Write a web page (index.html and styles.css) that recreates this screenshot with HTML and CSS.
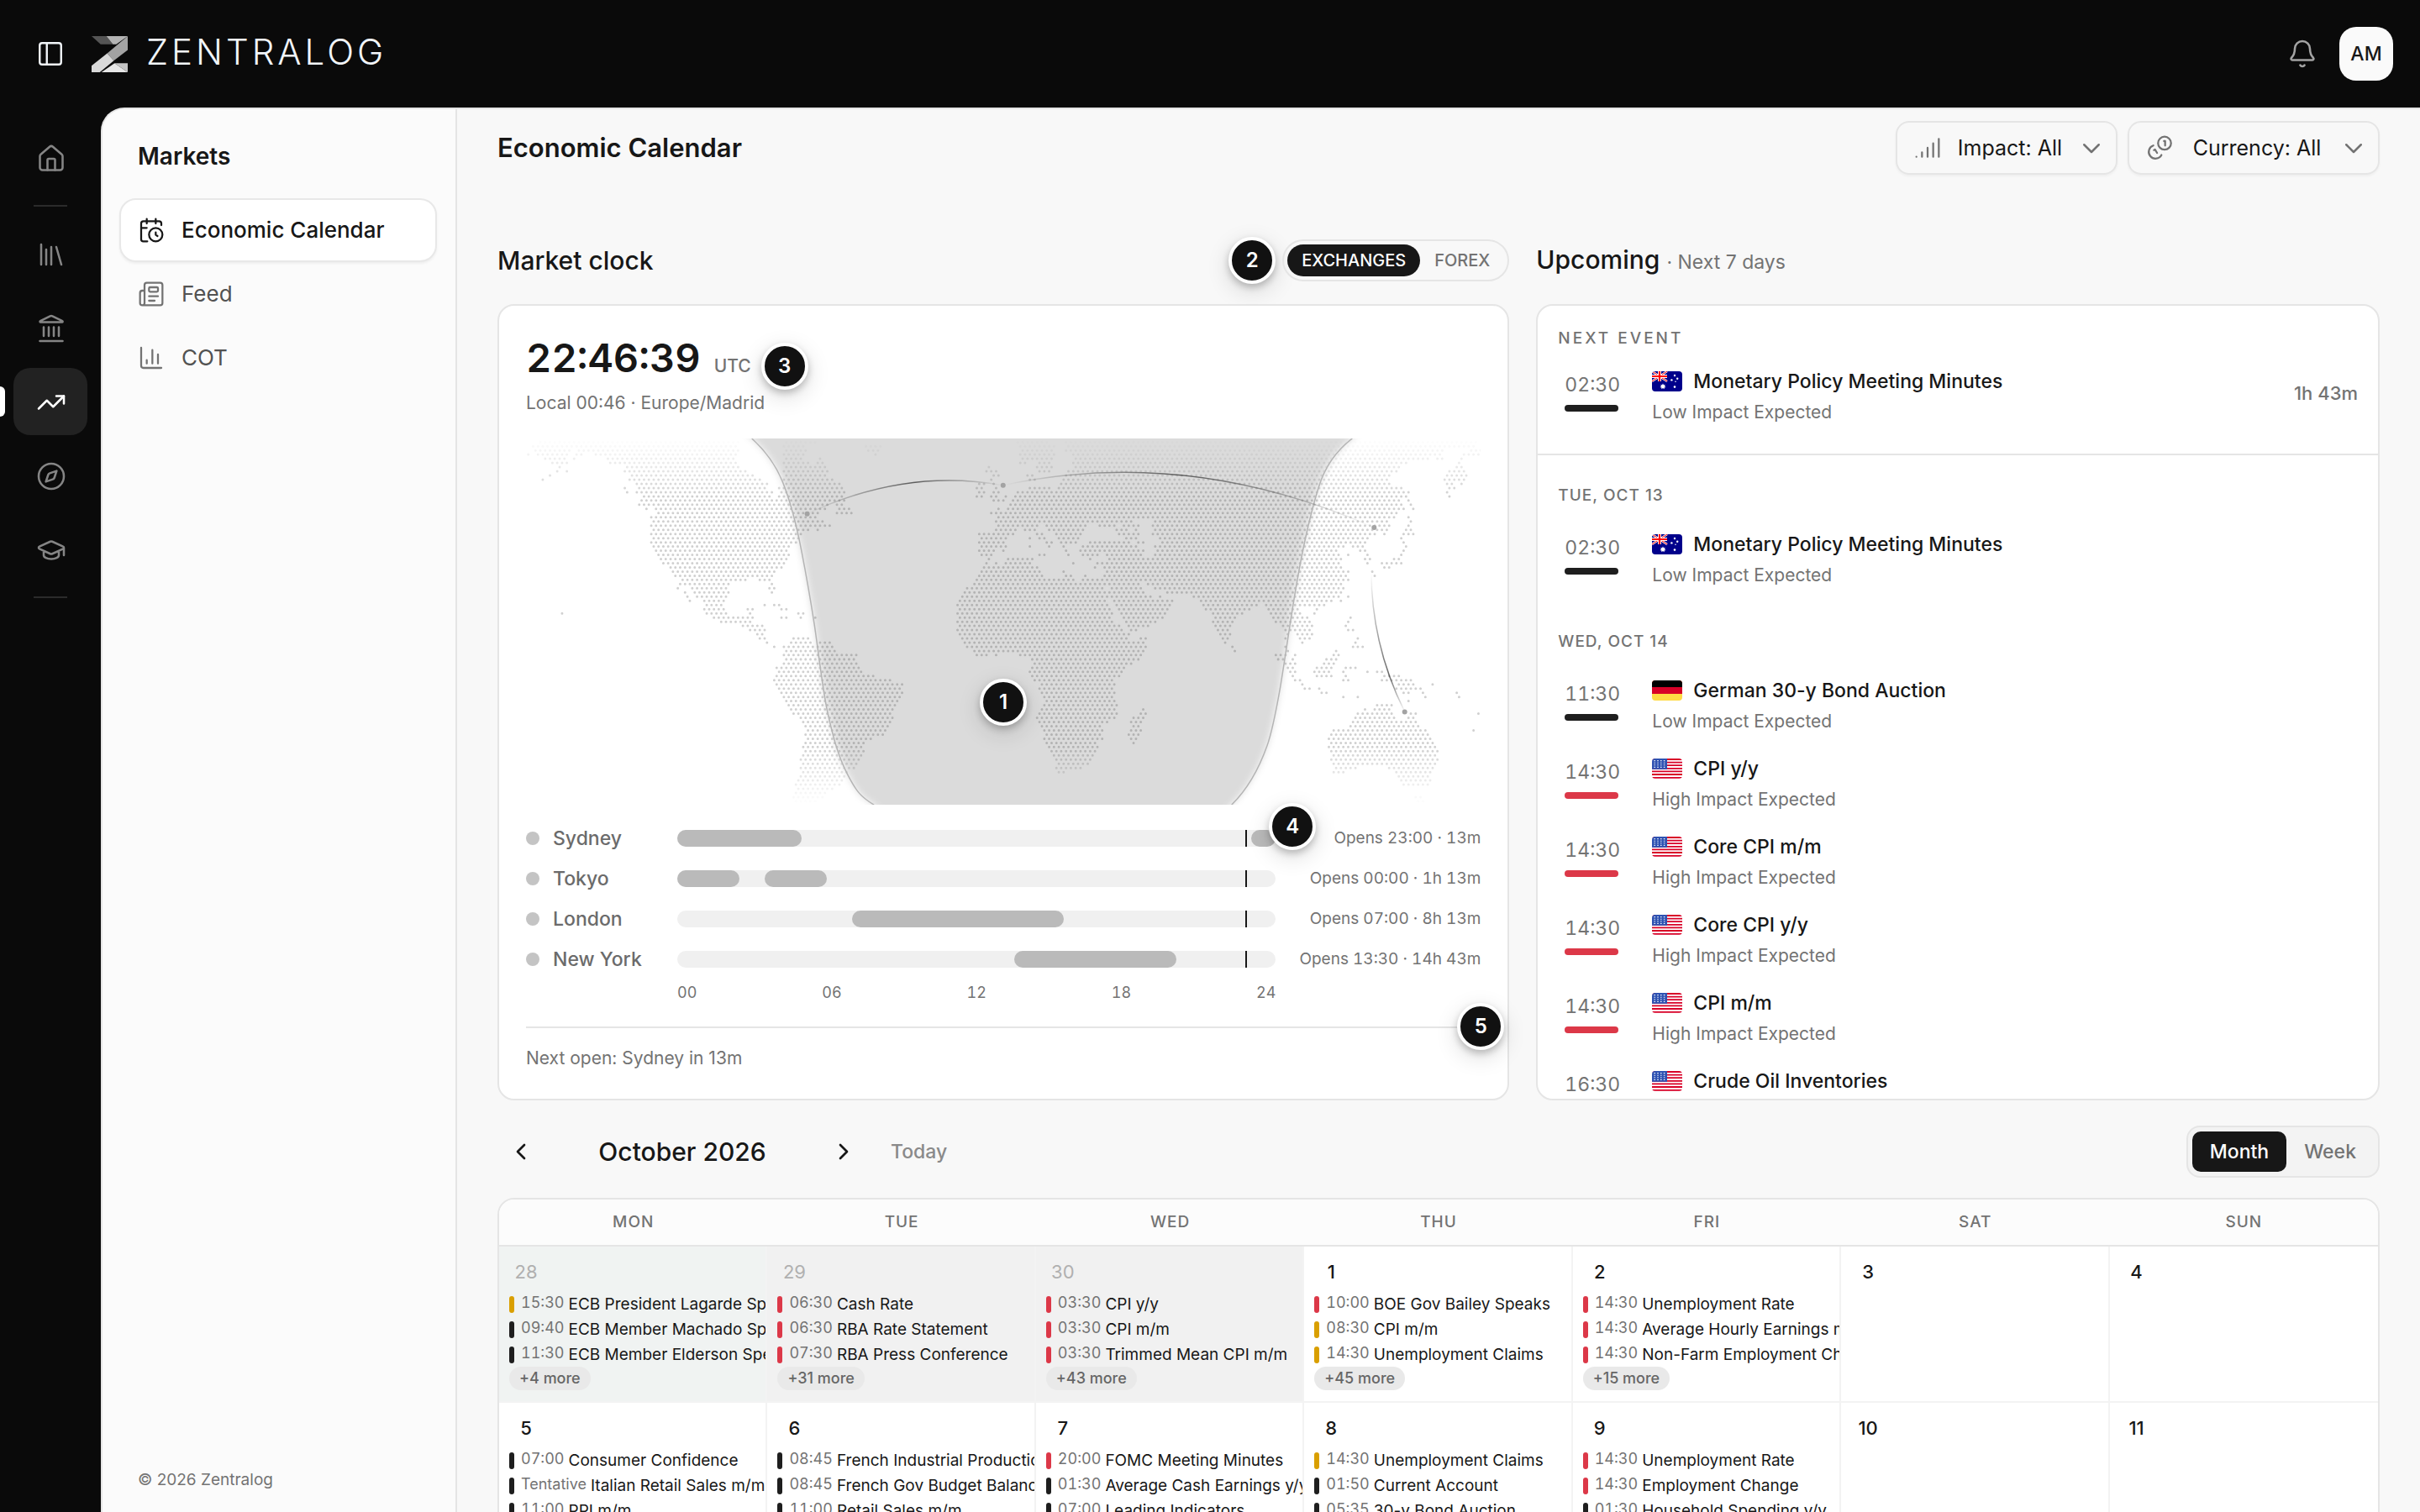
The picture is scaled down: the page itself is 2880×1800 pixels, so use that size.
FILE: index.html
```html
<!DOCTYPE html>
<html lang="en">
<head>
<meta charset="utf-8">
<title>Economic Calendar – Zentralog</title>
<meta name="viewport" content="width=device-width, initial-scale=1">
<link rel="stylesheet" href="styles.css">
</head>
<body>
<svg class="sprite" aria-hidden="true">
  <symbol id="flag-au" viewBox="0 0 36 24">
    <rect width="36" height="24" fill="#00008b"/>
    <path d="M0 0l18 12M18 0L0 12" stroke="#fff" stroke-width="2.4"/>
    <path d="M0 0l18 12M18 0L0 12" stroke="#f00" stroke-width="1"/>
    <path d="M9 0v12M0 6h18" stroke="#fff" stroke-width="4"/>
    <path d="M9 0v12M0 6h18" stroke="#f00" stroke-width="2.2"/>
    <path d="M13 14.6l.9 1.7 1.9-.4-.8 1.8 1.5 1.2-1.9.5v1.9l-1.6-1.2-1.6 1.2v-1.9l-1.9-.5 1.5-1.2-.8-1.8 1.9.4z" fill="#fff"/>
    <circle cx="27" cy="5" r="1.2" fill="#fff"/><circle cx="23.4" cy="10.4" r="1.2" fill="#fff"/><circle cx="30.2" cy="8.8" r="1.2" fill="#fff"/><circle cx="27" cy="18.6" r="1.3" fill="#fff"/><circle cx="28" cy="12.2" r=".8" fill="#fff"/>
  </symbol>
  <symbol id="flag-de" viewBox="0 0 36 24">
    <rect width="36" height="24" fill="#ffda44"/><rect width="36" height="16" fill="#d80027"/><rect width="36" height="8" fill="#000"/>
  </symbol>
  <symbol id="flag-us" viewBox="0 0 36 24">
    <rect width="36" height="24" fill="#fff"/>
    <path d="M0 1h36M0 4.6h36M0 8.2h36M0 11.8h36M0 15.4h36M0 19h36M0 22.8h36" stroke="#d80027" stroke-width="1.8"/>
    <rect width="18" height="12.8" fill="#2e52b2"/>
    <path d="M2.5 2.6h14M2.5 5.2h14M2.5 7.8h14M2.5 10.4h14" stroke="#fff" stroke-width="1.1" stroke-dasharray="1.4 2.4"/>
  </symbol>
  <symbol id="chevron-down" viewBox="0 0 24 24"><path d="M5 9l7 7 7-7"/></symbol>
</svg>

<div class="app">
  <header class="topbar">
    <button class="icon-button" type="button" aria-label="Toggle sidebar">
      <svg class="icon icon-panel" viewBox="0 0 24 24"><rect x="3" y="3" width="18" height="18" rx="2"/><path d="M9 3v18"/></svg>
    </button>
    <a class="brand" href="#">
      <svg class="brand-mark" viewBox="0 0 44 44" aria-hidden="true">
        <path d="M0 0h18l8 10H11z" fill="#555"/>
        <path d="M18 0h26L30 10h-4z" fill="#b4b4b4"/>
        <path d="M44 0v17L27 30l-8-9z" fill="#a3a3a3"/>
        <path d="M19 21l8 9-17 14H0V36z" fill="#d9d9d9"/>
        <path d="M28 33l-16 11h32z" fill="#e6e6e6"/>
        <path d="M28 33h16v11z" fill="#c4c4c4"/>
      </svg>
      <span class="brand-name">ZENTRALOG</span>
    </a>
    <button class="icon-button bell" type="button" aria-label="Notifications">
      <svg class="icon" viewBox="0 0 24 24"><path d="M10.27 21a2 2 0 0 0 3.46 0M3.26 15.33A1 1 0 0 0 4 17h16a1 1 0 0 0 .74-1.67C19.41 13.96 18 12.5 18 8A6 6 0 0 0 6 8c0 4.5-1.41 5.96-2.74 7.33"/></svg>
    </button>
    <button class="avatar" type="button" aria-label="Account">AM</button>
  </header>

  <nav class="rail" aria-label="Sections">
    <a class="rail-item" href="#" aria-label="Home"><svg class="icon" viewBox="0 0 24 24"><path d="M15 21v-8a1 1 0 0 0-1-1h-4a1 1 0 0 0-1 1v8"/><path d="M3 10a2 2 0 0 1 .7-1.53l7-6a2 2 0 0 1 2.6 0l7 6A2 2 0 0 1 21 10v9a2 2 0 0 1-2 2H5a2 2 0 0 1-2-2z"/></svg></a>
    <hr class="rail-rule">
    <a class="rail-item" href="#" aria-label="Library"><svg class="icon" viewBox="0 0 24 24"><path d="M16 6l4 14M12 6v14M8 8v12M4 4v16"/></svg></a>
    <a class="rail-item" href="#" aria-label="Banks"><svg class="icon" viewBox="0 0 24 24"><path d="M6 18v-7M10 18v-7M14 18v-7M18 18v-7M3 22h18M11.1 2.2a2 2 0 0 1 1.8 0l7.9 3.9c.5.2.3.9-.2.9H3.5c-.5 0-.7-.7-.2-.9z"/></svg></a>
    <a class="rail-item active" href="#" aria-label="Markets" aria-current="page"><svg class="icon" viewBox="0 0 24 24"><path d="M22 7l-8.500 8.500-5-5L2 17"/><path d="M16 7h6v6"/></svg></a>
    <a class="rail-item" href="#" aria-label="Explore"><svg class="icon" viewBox="0 0 24 24"><circle cx="12" cy="12" r="10"/><path d="M16.240 7.760l-1.800 5.410a2 2 0 0 1-1.270 1.270L7.760 16.240l1.800-5.410a2 2 0 0 1 1.270-1.270z"/></svg></a>
    <a class="rail-item" href="#" aria-label="Academy"><svg class="icon" viewBox="0 0 24 24"><path d="M21.420 10.920a1 1 0 0 0-.02-1.840L12.830 5.180a2 2 0 0 0-1.660 0L2.600 9.080a1 1 0 0 0 0 1.830l8.570 3.910a2 2 0 0 0 1.660 0zM22 10v6M6 12.500V16a6 3 0 0 0 12 0v-3.500"/></svg></a>
    <hr class="rail-rule">
  </nav>

  <div class="panel">
    <aside class="sidebar">
      <h2 class="sidebar-title">Markets</h2>
      <nav class="menu" aria-label="Markets">
        <a class="menu-item active" href="#" aria-current="page"><svg class="icon" viewBox="0 0 24 24"><path d="M16 14v2.200l1.600 1M16 2v4M21 7.500V6a2 2 0 0 0-2-2H5a2 2 0 0 0-2 2v14a2 2 0 0 0 2 2h3.500M3 10h5M8 2v4"/><circle cx="16" cy="16" r="6"/></svg>Economic Calendar</a>
        <a class="menu-item" href="#"><svg class="icon" viewBox="0 0 24 24"><path d="M15 18h-5M18 14h-8M4 22h16a2 2 0 0 0 2-2V4a2 2 0 0 0-2-2H8a2 2 0 0 0-2 2v16a2 2 0 0 1-4 0v-9a2 2 0 0 1 2-2h2"/><rect x="10" y="6" width="8" height="4" rx="1"/></svg>Feed</a>
        <a class="menu-item" href="#"><svg class="icon" viewBox="0 0 24 24"><path d="M3 3v16a2 2 0 0 0 2 2h16M18 17V9M13 17V5M8 17v-3"/></svg>COT</a>
      </nav>
      <p class="copyright">© 2026 Zentralog</p>
    </aside>

    <main class="main">
      <div class="page-head">
        <h1 class="page-title">Economic Calendar</h1>
        <div class="filters">
          <label class="filter filter-impact">
            <svg class="icon" viewBox="0 0 24 24"><path d="M2 20h.01M7 20v-4M12 20v-8M17 20V8M22 4v16"/></svg>
            <select aria-label="Impact"><option>Impact: All</option></select>
            <svg class="icon chevron"><use href="#chevron-down"/></svg>
          </label>
          <label class="filter filter-currency">
            <svg class="icon" viewBox="0 0 24 24"><path d="M13.740 18.330A6 6 0 1 1 6.460 9.900M7 14l1-.5 1.800 3M16 6h1v4"/><circle cx="16.500" cy="7.800" r="5.800"/></svg>
            <select aria-label="Currency"><option>Currency: All</option></select>
            <svg class="icon chevron"><use href="#chevron-down"/></svg>
          </label>
        </div>
      </div>

      <div class="columns">
        <section class="column">
          <div class="section-head">
            <h2 class="section-title">Market clock</h2>
            <div class="clock-tools">
              <span class="marker">2</span>
              <div class="pill-toggle">
                <button class="pill on" type="button" aria-pressed="true">EXCHANGES</button>
                <button class="pill" type="button" aria-pressed="false">FOREX</button>
              </div>
            </div>
          </div>
          <div class="card clock-card">
            <div class="clock-line">
              <span class="clock-time">22:46:39</span>
              <span class="clock-zone">UTC<span class="marker marker-zone">3</span></span>
            </div>
            <p class="clock-local">Local 00:46 · Europe/Madrid</p>
            <div class="map">
              <svg class="map-svg" viewBox="0 0 1136 436" role="img" aria-label="World map with day and night">
                <defs>
                  <linearGradient id="fade" x1="0" y1="0" x2="0" y2="1">
                    <stop offset="0" stop-color="#fff" stop-opacity="0"/><stop offset=".16" stop-color="#fff"/>
                    <stop offset=".84" stop-color="#fff"/><stop offset="1" stop-color="#fff" stop-opacity="0"/>
                  </linearGradient>
                  <mask id="fade-mask" maskUnits="userSpaceOnUse" x="0" y="0" width="1136" height="436"><rect width="1136" height="436" fill="url(#fade)"/></mask>
                  <filter id="soft" x="-5%" y="-5%" width="110%" height="110%"><feGaussianBlur stdDeviation="4"/></filter>
                  <linearGradient id="arc-a" gradientUnits="userSpaceOnUse" x1="334" y1="0" x2="568" y2="0"><stop offset="0" stop-color="#333" stop-opacity="0"/><stop offset=".55" stop-color="#333" stop-opacity=".75"/><stop offset="1" stop-color="#333" stop-opacity="0"/></linearGradient>
                  <linearGradient id="arc-b" gradientUnits="userSpaceOnUse" x1="568" y1="0" x2="1009" y2="0"><stop offset="0" stop-color="#333" stop-opacity="0"/><stop offset=".48" stop-color="#333" stop-opacity=".75"/><stop offset="1" stop-color="#333" stop-opacity="0"/></linearGradient>
                  <linearGradient id="arc-c" gradientUnits="userSpaceOnUse" x1="0" y1="106" x2="0" y2="326"><stop offset=".25" stop-color="#333" stop-opacity="0"/><stop offset=".8" stop-color="#333" stop-opacity=".75"/><stop offset="1" stop-color="#333" stop-opacity="0"/></linearGradient>
                </defs>
                <path id="land" class="land" mask="url(#fade-mask)"/>
                <path class="night" filter="url(#soft)" d="M238-30L268.700 0C284 14 296 29 305 51S322 104 328 135S339 195 343 221S353 300 358.600 325S370 375 381.600 398S399 427 414 436L446 466H810L839.500 436C862 414 875 386 881.600 366S894 315 897 298S907 235 909 221S916 174 920 155S934 85 943 58S966 13 983 0L1013-30z"/>
                <path class="terminator" d="M268.700 0C284 14 296 29 305 51S322 104 328 135S339 195 343 221S353 300 358.600 325S370 375 381.600 398S399 427 414 436M983 0C966 13 951 32 943 58S925 128 920 155S911 208 909 221S900 281 897 298S888 348 881.600 366S862 414 839.500 436"/>
                <path class="arc" stroke="url(#arc-a)" d="M334.500 89.700Q451 34.700 567.600 55.700"/>
                <path class="arc" stroke="url(#arc-b)" d="M567.600 55.700Q788 8.400 1009 106"/>
                <path class="arc" stroke="url(#arc-c)" d="M1009 106Q994 222 1045.400 325.300"/>
                <g class="city"><circle cx="334.500" cy="89.700" r="3"/><circle cx="567.600" cy="55.700" r="3"/><circle cx="1009" cy="106" r="3"/><circle cx="1045.400" cy="325.300" r="3"/></g>
              </svg>
              <span class="marker marker-map">1</span>
            </div>
            <ul class="sessions">
              <li class="session"><span class="session-name">Sydney</span><span class="track"><i class="span" style="left:0;width:20.830%"></i><i class="span" style="left:95.830%;width:4.170%"></i><i class="now"></i><span class="marker marker-track">4</span></span><span class="session-note">Opens 23:00 · 13m</span></li>
              <li class="session"><span class="session-name">Tokyo</span><span class="track"><i class="span" style="left:0;width:10.420%"></i><i class="span" style="left:14.580%;width:10.420%"></i><i class="now"></i></span><span class="session-note">Opens 00:00 · 1h 13m</span></li>
              <li class="session"><span class="session-name">London</span><span class="track"><i class="span" style="left:29.170%;width:35.420%"></i><i class="now"></i></span><span class="session-note">Opens 07:00 · 8h 13m</span></li>
              <li class="session"><span class="session-name">New York</span><span class="track"><i class="span" style="left:56.250%;width:27.080%"></i><i class="now"></i></span><span class="session-note">Opens 13:30 · 14h 43m</span></li>
            </ul>
            <div class="axis"><span class="axis-scale"><span>00</span><span>06</span><span>12</span><span>18</span><span>24</span></span></div>
            <div class="clock-foot">Next open: Sydney in 13m<span class="marker marker-foot">5</span></div>
          </div>
        </section>

        <section class="column">
          <div class="section-head">
            <h2 class="section-title">Upcoming <small>· Next 7 days</small></h2>
          </div>
          <div class="card upcoming">
            <div class="next-event">
              <h3 class="eyebrow">NEXT EVENT</h3>
              <article class="event">
                <div class="event-time low">02:30</div>
                <div class="event-body"><h4><svg class="flag"><use href="#flag-au"/></svg>Monetary Policy Meeting Minutes</h4><p>Low Impact Expected</p></div>
                <span class="event-left">1h 43m</span>
              </article>
            </div>
            <div class="event-list">
              <section class="event-day">
                <h3 class="day-label">TUE, OCT 13</h3>
                <article class="event"><div class="event-time low">02:30</div><div class="event-body"><h4><svg class="flag"><use href="#flag-au"/></svg>Monetary Policy Meeting Minutes</h4><p>Low Impact Expected</p></div></article>
              </section>
              <section class="event-day">
                <h3 class="day-label">WED, OCT 14</h3>
                <article class="event"><div class="event-time low">11:30</div><div class="event-body"><h4><svg class="flag"><use href="#flag-de"/></svg>German 30-y Bond Auction</h4><p>Low Impact Expected</p></div></article>
                <article class="event"><div class="event-time high">14:30</div><div class="event-body"><h4><svg class="flag"><use href="#flag-us"/></svg>CPI y/y</h4><p>High Impact Expected</p></div></article>
                <article class="event"><div class="event-time high">14:30</div><div class="event-body"><h4><svg class="flag"><use href="#flag-us"/></svg>Core CPI m/m</h4><p>High Impact Expected</p></div></article>
                <article class="event"><div class="event-time high">14:30</div><div class="event-body"><h4><svg class="flag"><use href="#flag-us"/></svg>Core CPI y/y</h4><p>High Impact Expected</p></div></article>
                <article class="event"><div class="event-time high">14:30</div><div class="event-body"><h4><svg class="flag"><use href="#flag-us"/></svg>CPI m/m</h4><p>High Impact Expected</p></div></article>
                <article class="event"><div class="event-time low">16:30</div><div class="event-body"><h4><svg class="flag"><use href="#flag-us"/></svg>Crude Oil Inventories</h4></div></article>
              </section>
            </div>
          </div>
        </section>
      </div>

      <div class="cal-bar">
        <button class="cal-arrow" type="button" aria-label="Previous month"><svg class="icon" viewBox="0 0 24 24"><path d="M15 18l-6-6 6-6"/></svg></button>
        <h2 class="cal-title">October 2026</h2>
        <button class="cal-arrow" type="button" aria-label="Next month"><svg class="icon" viewBox="0 0 24 24"><path d="M9 18l6-6-6-6"/></svg></button>
        <button class="cal-today" type="button">Today</button>
        <div class="view-toggle">
          <button class="view on" type="button" aria-pressed="true">Month</button>
          <button class="view" type="button" aria-pressed="false">Week</button>
        </div>
      </div>

      <div class="cal-frame">
        <table class="cal">
          <thead><tr><th>MON</th><th>TUE</th><th>WED</th><th>THU</th><th>FRI</th><th>SAT</th><th>SUN</th></tr></thead>
          <tbody>
            <tr>
              <td class="out first"><span class="date">28</span>
                <p class="item medium"><time>15:30</time>ECB President Lagarde Speaks</p><p class="item low"><time>09:40</time>ECB Member Machado Speaks</p><p class="item low"><time>11:30</time>ECB Member Elderson Speaks</p><button class="more" type="button">+4 more</button></td>
              <td class="out"><span class="date">29</span>
                <p class="item high"><time>06:30</time>Cash Rate</p><p class="item high"><time>06:30</time>RBA Rate Statement</p><p class="item high"><time>07:30</time>RBA Press Conference</p><button class="more" type="button">+31 more</button></td>
              <td class="out"><span class="date">30</span>
                <p class="item high"><time>03:30</time>CPI y/y</p><p class="item high"><time>03:30</time>CPI m/m</p><p class="item high"><time>03:30</time>Trimmed Mean CPI m/m</p><button class="more" type="button">+43 more</button></td>
              <td><span class="date">1</span>
                <p class="item high"><time>10:00</time>BOE Gov Bailey Speaks</p><p class="item medium"><time>08:30</time>CPI m/m</p><p class="item medium"><time>14:30</time>Unemployment Claims</p><button class="more" type="button">+45 more</button></td>
              <td><span class="date">2</span>
                <p class="item high"><time>14:30</time>Unemployment Rate</p><p class="item high"><time>14:30</time>Average Hourly Earnings m/m</p><p class="item high"><time>14:30</time>Non-Farm Employment Change</p><button class="more" type="button">+15 more</button></td>
              <td><span class="date">3</span></td>
              <td><span class="date">4</span></td>
            </tr>
            <tr>
              <td><span class="date">5</span>
                <p class="item low"><time>07:00</time>Consumer Confidence</p><p class="item low"><time>Tentative</time>Italian Retail Sales m/m</p><p class="item low"><time>11:00</time>PPI m/m</p></td>
              <td><span class="date">6</span>
                <p class="item low"><time>08:45</time>French Industrial Production m/m</p><p class="item low"><time>08:45</time>French Gov Budget Balance</p><p class="item low"><time>11:00</time>Retail Sales m/m</p></td>
              <td><span class="date">7</span>
                <p class="item high"><time>20:00</time>FOMC Meeting Minutes</p><p class="item low"><time>01:30</time>Average Cash Earnings y/y</p><p class="item low"><time>07:00</time>Leading Indicators</p></td>
              <td><span class="date">8</span>
                <p class="item medium"><time>14:30</time>Unemployment Claims</p><p class="item low"><time>01:50</time>Current Account</p><p class="item low"><time>05:35</time>30-y Bond Auction</p></td>
              <td><span class="date">9</span>
                <p class="item high"><time>14:30</time>Unemployment Rate</p><p class="item high"><time>14:30</time>Employment Change</p><p class="item low"><time>01:30</time>Household Spending y/y</p></td>
              <td><span class="date">10</span></td>
              <td><span class="date">11</span></td>
            </tr>
          </tbody>
        </table>
      </div>
    </main>
  </div>
</div>
<script src="map.js"></script>
</body>
</html>
```
FILE: styles.css
```css
:root {
  --ink: #171717;
  --muted: #737373;
  --line: #e5e5e5;
  --high: #dc3848;
  --medium: #d99f00;
  --low: #1e1e1e;
  --text-xs: 18px;
  --text-s: 19px;
  --text-m: 21px;
  --text-l: 23px;
  --text-xl: 26px;
  --text-2xl: 30px;
}

* { box-sizing: border-box; }

body, h1, h2, h3, h4, p, ul, hr { margin: 0; padding: 0; }

body {
  background: #0a0a0a;
  color: var(--ink);
  font-family: Inter, "Liberation Sans", sans-serif;
  font-size: var(--text-l);
  line-height: 28px;
}

h1, h2, h3, h4 { font-weight: 500; }
ul { list-style: none; }
a { color: inherit; text-decoration: none; }

button, select {
  border: 0;
  background: none;
  color: inherit;
  font: inherit;
  padding: 0;
}

.sprite { position: absolute; width: 0; height: 0; }

.icon {
  width: 32px;
  height: 32px;
  flex: none;
  fill: none;
  stroke: currentColor;
  stroke-width: 1.7;
  stroke-linecap: round;
  stroke-linejoin: round;
}

.app {
  display: grid;
  grid-template: 128px minmax(0, 1fr) / 120px minmax(0, 1fr);
  height: 100vh;
  overflow: hidden;
}

/* Top bar */
.topbar {
  grid-column: 1 / -1;
  display: flex;
  align-items: center;
  padding: 0 32px 0 40px;
}

.icon-button { display: grid; place-items: center; width: 40px; height: 40px; color: #f1f5f9; }
.icon-panel { width: 34px; height: 34px; }
.bell { margin-left: auto; margin-right: 24px; color: #a3a3a3; }

.brand { display: flex; align-items: center; gap: 22px; margin-left: 29px; color: #f1f5f9; }
.brand-mark { width: 43px; height: 43px; }
.brand-name { padding-bottom: 5px; font-size: 42px; font-weight: 300; line-height: 48px; letter-spacing: 4px; }

.avatar {
  width: 64px;
  height: 64px;
  border-radius: 20px;
  background: #fafafa;
  color: var(--ink);
  font-weight: 500;
}

/* Icon rail */
.rail { display: flex; flex-direction: column; align-items: center; gap: 8px; padding: 20px 16px; color: #858585; }

.rail-item {
  position: relative;
  display: grid;
  place-items: center;
  width: 88px;
  height: 80px;
  padding: 1px 0 0 1px;
  border-radius: 20px;
}

.rail-item .icon, .bell .icon { width: 36px; height: 36px; }
.rail-item.active { background: #222; color: #fff; }

.rail-item.active::before {
  content: "";
  position: absolute;
  left: -16px;
  top: 22px;
  width: 6px;
  height: 36px;
  border-radius: 0 6px 6px 0;
  background: #fff;
}

.rail-rule { width: 40px; height: 2px; margin: 8px 0; border: 0; background: #2b2b2b; }

/* Panel and sidebar */
.panel {
  display: grid;
  grid-template-columns: 422px minmax(0, 1fr);
  border: solid var(--line);
  border-width: 2px 0 0 2px;
  border-top-left-radius: 28px;
  background: #f8f8f8;
  overflow: hidden;
}

.sidebar {
  display: flex;
  flex-direction: column;
  padding: 40px 22px 24px 20px;
  border-right: 2px solid var(--line);
  background: #fbfbfb;
}

.sidebar-title { padding: 0 22px; font-size: 28px; font-weight: 600; line-height: 32px; }
.menu { margin-top: 34px; }

.menu-item {
  display: flex;
  align-items: center;
  gap: 20px;
  height: 76px;
  padding: 0 20px;
  border: 2px solid transparent;
  border-radius: 20px;
  color: #525252;
  font-size: var(--text-xl);
}

.menu-item .icon { color: #737373; }

.menu-item.active {
  border-color: #e8e8e8;
  background: #fff;
  color: var(--ink);
  font-weight: 500;
  box-shadow: 0 2px 3px rgb(0 0 0 / 5%);
}

.menu-item.active .icon { color: var(--ink); }
.copyright { margin-top: auto; padding: 0 22px; color: var(--muted); font-size: var(--text-s); }

/* Main area */
.main { padding: 0 48px; overflow: hidden; }
.page-head { display: flex; align-items: center; justify-content: space-between; padding: 14px 0; }
.page-title { font-size: 31px; font-weight: 600; line-height: 40px; }
.filters { display: flex; gap: 12px; }

.filter {
  display: flex;
  align-items: center;
  height: 64px;
  padding: 0 20px;
  border: 2px solid var(--line);
  border-radius: 16px;
  color: var(--muted);
  box-shadow: 0 2px 3px rgb(0 0 0 / 4%);
}

.filter-impact { width: 264px; }
.filter-currency { width: 300px; }
.filter select { flex: 1; min-width: 0; appearance: none; color: var(--ink); font-size: 25px; text-align-last: center; }
.filter .chevron { width: 30px; height: 30px; margin-right: -6px; stroke-width: 2; }

.columns { display: grid; grid-template-columns: minmax(0, 6fr) minmax(0, 5fr); gap: 32px; margin-top: 60px; }
.column { display: flex; flex-direction: column; }
.section-head { display: flex; align-items: center; justify-content: space-between; min-height: 56px; margin-bottom: 24px; }
.section-title { font-size: var(--text-2xl); line-height: 40px; }
.section-title small { color: var(--muted); font-size: var(--text-l); font-weight: 400; }

.clock-tools { display: flex; align-items: center; gap: 8px; }
.pill-toggle { display: flex; padding: 4px; border: 2px solid var(--line); border-radius: 25px; }
.pill { height: 38px; padding: 0 17px; border-radius: 19px; color: var(--muted); font-size: 20px; font-weight: 500; }
.pill.on { background: var(--ink); color: #fff; }

.card { border: 2px solid var(--line); border-radius: 20px; background: #fff; }

.marker {
  display: grid;
  place-items: center;
  width: 56px;
  height: 56px;
  border: 4px solid #fff;
  border-radius: 50%;
  background: #111;
  color: #fff;
  font-size: 24px;
  font-weight: 600;
  line-height: 28px;
  box-shadow: 0 4px 8px rgb(0 0 0 / 22%), 0 8px 28px rgb(0 0 0 / 14%);
}

/* Market clock */
.clock-card { padding: 32px 32px 34px; }
.clock-line { display: flex; align-items: baseline; gap: 16px; }
.clock-time { font-size: 47px; font-weight: 600; line-height: 60px; font-variant-numeric: tabular-nums; }
.clock-zone { position: relative; color: var(--muted); font-size: var(--text-m); font-weight: 500; }
.marker-zone { position: absolute; left: 100%; top: -14px; margin-left: 12px; }
.clock-local { margin-top: 10px; color: var(--muted); font-size: var(--text-m); }

.map { position: relative; margin-top: 28px; }
.map-svg { display: block; width: 100%; }
.land { fill: none; stroke: #d0d0d0; stroke-width: 3; stroke-linecap: round; }
.night { fill: rgb(0 0 0 / 14%); }
.terminator { fill: none; stroke: #b4b4b4; stroke-width: 1.500; }
.arc { fill: none; stroke-width: 1.500; }
.city { fill: #a3a3a3; }
.marker-map { position: absolute; left: 50%; top: 72%; translate: -50% -50%; }

.sessions { display: grid; gap: 20px; margin-top: 26px; }
.session, .axis { display: grid; grid-template-columns: 164px minmax(0, 1fr) 228px; gap: 16px; align-items: center; }
.session-name { display: flex; align-items: center; gap: 16px; color: #6b6b6b; font-weight: 500; }
.session-name::before { content: ""; width: 16px; height: 16px; border-radius: 50%; background: #c4c4c4; }
.track { position: relative; height: 20px; border-radius: 10px; background: #f0f0f0; }
.span { position: absolute; top: 0; height: 20px; border-radius: 10px; background: #bababa; }
.now { position: absolute; left: 94.900%; top: 0; width: 2px; height: 20px; background: var(--ink); }
.marker-track { position: absolute; right: -48px; top: -32px; }
.session-note { color: var(--muted); font-size: var(--text-s); text-align: right; font-variant-numeric: tabular-nums; white-space: nowrap; }
.axis { margin-top: 14px; }
.axis-scale { grid-column: 2; display: flex; justify-content: space-between; color: var(--muted); font-size: var(--text-xs); line-height: 24px; font-variant-numeric: tabular-nums; }
.clock-foot { position: relative; margin-top: 28px; padding-top: 22px; border-top: 2px solid var(--line); color: var(--muted); font-size: var(--text-m); }
.marker-foot { position: absolute; right: -28px; top: -30px; }

/* Upcoming events */
.upcoming { flex: 1; contain: size; overflow: hidden; }
.next-event { padding: 25px 24px 23px; border-bottom: 2px solid var(--line); }
.eyebrow { margin-bottom: 7px; color: var(--muted); font-size: var(--text-s); letter-spacing: 3px; }
.event-list { padding: 34px 24px; }
.event-day + .event-day { margin-top: 39px; }
.day-label { margin-bottom: 14px; color: var(--muted); font-size: var(--text-s); letter-spacing: 1px; }

.event { display: flex; gap: 40px; height: 93px; padding: 14px 0 0 8px; }
.event-time { width: 64px; padding-top: 6px; color: var(--muted); font-size: var(--text-l); font-variant-numeric: tabular-nums; text-align: center; white-space: nowrap; }
.event-time::after { content: ""; display: block; height: 8px; margin-top: 10px; border-radius: 4px; background: var(--impact); }
.event-body { flex: 1; }
.event-body h4 { display: flex; align-items: center; gap: 13px; font-size: var(--text-l); line-height: 32px; }
.event-body p { margin-top: 7px; color: var(--muted); font-size: var(--text-m); }
.flag { width: 36px; height: 24px; border-radius: 4px; }
.event-left { margin-top: 16px; color: var(--muted); font-size: 22px; font-weight: 500; }

.low { --impact: var(--low); }
.medium { --impact: var(--medium); }
.high { --impact: var(--high); }

/* Calendar */
.cal-bar { display: flex; align-items: center; height: 62px; margin: 30px 0 24px; }
.cal-arrow { display: grid; place-items: center; width: 56px; height: 56px; }
.cal-arrow .icon { stroke-width: 2; }
.cal-title { width: 328px; font-size: var(--text-2xl); line-height: 40px; text-align: center; }
.cal-today { margin-left: 28px; color: #8a8a8a; font-weight: 500; }
.view-toggle { display: flex; margin-left: auto; padding: 5px; border: 2px solid var(--line); border-radius: 16px; background: #f3f3f3; }
.view { height: 48px; padding: 0 21px; border-radius: 10px; color: var(--muted); font-weight: 500; }
.view.on { background: var(--ink); color: #fff; }

.cal-frame { border: 2px solid var(--line); border-radius: 20px 20px 0 0; background: #fff; overflow: hidden; }
.cal { width: 100%; border-spacing: 0; table-layout: fixed; }
.cal th { height: 56px; padding: 0; border-bottom: 2px solid var(--line); background: #fcfcfc; color: var(--muted); font-size: var(--text-s); font-weight: 500; letter-spacing: 1px; }
.cal td { height: 186px; padding: 16px 0 8px 12px; border: solid #f3f3f3; border-width: 0 2px 2px 0; vertical-align: top; overflow: hidden; }
.cal td:last-child { border-right: 0; }
.cal .out { background: #f1f1f1; }
.cal .out.first { background: #f0f3f2; }
.date { display: block; width: 40px; margin-bottom: 9px; font-size: 22px; font-weight: 500; text-align: center; }
.out .date { color: #b0b0b0; font-weight: 400; }
.item { display: flex; align-items: center; height: 30px; padding-top: 2px; overflow: hidden; font-size: var(--text-s); line-height: 24px; white-space: nowrap; }
.item::before { content: ""; flex: none; width: 6px; height: 20px; margin-right: 8px; border-radius: 3px; background: var(--impact); }
.item time { margin-right: 5px; padding-bottom: 4px; color: var(--muted); font-size: var(--text-xs); font-variant-numeric: tabular-nums; }
.more { display: block; height: 28px; padding: 0 12px; border-radius: 14px; background: #e9e9e9; color: #666; font-size: var(--text-xs); font-weight: 500; line-height: 26px; }
```
FILE: map.js
```js
// Land dots on a hexagonal lattice. Each line is one lattice row from the north,
// listing runs "from-to" (or a single dot) in sheet units; the second half of a
// line, after "|", belongs to the eastern sheet.
const FIRST_ROW = 3;
const ROWS = `105-720 870-960|60-150 210-1480
90-720 870-930 1125-1170|60-165 210-1475
97-202 232-720 877-937 1135-1165|67-157 202-1375 1465-1490
75 105-195 225-240 285-715 870-930 1155|60-165 225-1375 1445-1490
127-187 217 322-712 877-922 982|67-157 232-1335 1360-1372 1440
150-195 330-720 870-945 975-990|60-75 120-150 225-1262 1430
172 382-727 877-997 1507|115-155 232-1240 1415-1430
165 195 375-750 870-1005 1500-1530|120-150 210-1230 1400-1445
142 397-772 877-1000 1515-1530|82-105 200-1215 1395-1447
120 390-795 870-1020 1515|90-105 195-1200 1390-1440
412-817 877-1042 1477-1492 1522|187-1205 1397-1410 1437
375 420-810 855-1050 1470-1485 1530|90-160 180-1250 1400-1410
382 412-832 862-1057 1477-1492 1522-1537|52-1270 1390
435-825 855-1050 1470-1485 1515-1530|15 45-1260 1397
427-1057 1522-1537|7 37-1247 1275
420-1005 1035-1050|30-1245 1275
442 472-975 1000 1042-1072 1537|22-1250 1280
480-975 1035-1080 1515 1530|0-1240
457-967 1537|7-1230 1275
465-990 1530|0-277 292-410 480-1210 1275
457-1012 1537|7-112 142-270 312-352 382-437 472-1215 1275
465-945 975 1530|0-45 75-105 150-262 360-395 427 480-1200 1260-1275
457-922 1477-1537|7-37 112-130 172-247 367-427 472-1160 1195 1252-1282
465-915 1485-1530|0-15 90 120-135 180-240 390-427 495-1140 1245
457-907 1477-1537|7 150-165 187-240 277-400 427-442 500-1090 1110-1130 1252
465-885 1485-1530|0-15 90 150 200 255-430 480-1065 1095-1130 1260
472-877 1477-1522|7 202 247-445 487-1050 1127-1142 1250
480-880 1485-1515|120-135 210 255-310 340-435 480-1055 1080 1140 1245
487-877 1507|22-105 277 337-1065 1130-1145 1225-1240
495-870 1500 1530|15-100 225 300-315 330-1060 1145 1190-1250
517-862 1492-1537|7-112 300 322-1065 1190-1210
525-840 1485-1530|0-120 195 330-1080 1157
532-832 1477-1537|7-127 202-217 270 322-1075 1165
555-750 795-825 1470-1530|0-225 262-440 457-1080
547-697 832 1462-1537|7-427 457-1065
540 585-685 825-840 1440-1530|0-315 345-435 480-1065
562 592-690 832 1432-1537|7-320 345-445 520-1065
570 600-685 1425-1530|0-330 345-470 495 600-1050 1080
577 622-680 1417-1537|7-325 352-530 622-1035 1065
630-675 810 840-855 1410-1530|0-330 360-525 630-800 825-1010
622-680 757-772 862-877 1417-1537|7-340 367-525 637-780 832-930 985
180 630-690 765 915-930 1410-1530|0-345 375-510 660-750 840-930 975
652-772 862-877 922 967 1417-1537|7-340 382-510 667-735 847-960 1090
675-765 1410-1530|0-345 390-480 660-720 855-960 1080
742-802 1417-1537|7-367 397-460 667-710 877-967 1075
765-810 1410-1530|0-375 405-420 675-705 885-970 1080-1095
787-802 1417-1537|7-400 682-712 892 922-967
795-810 900-945 1425-1530|0-390 435-450 690-705 885 930-960 1110
817 892-952 982-1012 1432-1537|7-450 700 937 1112
840 870-1020 1440-1530|0-450 720 885 1095-1125
877-1027 1462-1537|7-450 727 892 1045
870-1090 1470-1500 1530|60-435 855-885 915 1035-1050
877-1090|97-430 862-877 907 1015-1040
870-1095|105-405 885-915 1005-1040
847-1105|97-390 892-907 982-1030 1072-1100
855-1110|90-375 907-920 975-1030 1065 1140 1170-1185
847-1150|97-375 907 982-1030 1075 1202-1240
840-1200|105-345 915-930 1065-1080 1185-1280
847-1240|127-350 937 1240-1285 1345
855-1230|120-345 945-960 990 1230-1310
862-1240|127-352 1000-1015 1255-1270 1315 1420
870-1230|135-345 1065 1110 1320 1425
877-1225|142-360 1270
885-1220|135-360 1170-1220
893-1210|127-362 442 1135 1165-1210
900-1205|120-360 435-450 1110-1220 1275-1290 1485
922-1200|112-350 412-440 1105-1230 1265-1290
930-1200|120-330 405-435 1095-1290
937-1195|127-310 412-435 1090-1300
945-1185|135-315 405-435 1035-1320 1470
937-1180|142-315 397-430 1030-1330
945-1140|135-315 405-420 1020-1335
937-1120|142-300 415 1030-1340
930-1115|150-300 1020-1350
937-1115|157-300 1030-1360
930-1110|165-285 1035-1350
922-1105|172-280 1030-1360
930-1095|180-270 1035-1350
922-1090|172-250 1045-1105 1210-1345
930-1065|180-195 1035-1065 1230-1335
922-1055|1240-1330
915-1050|1245-1335
907-1045|1255-1330
915-1020|
907-1000|
900-990|1290-1310
910-970|1300-1310`.split("\n");

const STEP = 5.738;
const ROW_STEP = 4.973;
const EAST = 1542;
let d = "";

ROWS.forEach((line, i) => {
  const row = i + FIRST_ROW;
  const shift = row % 2 ? 0.5 : 0;
  const y = (row * ROW_STEP - 10.7).toFixed(1);
  line.split("|").forEach((half, sheet) => {
    half.split(" ").filter(Boolean).forEach((run) => {
      const [from, to = from] = run.split("-").map((v) => Math.round((+v + sheet * EAST) / 15 - shift));
      for (let n = from; n <= to; n++) {
        d += `M${((n + shift) * STEP - 26).toFixed(1)} ${y}h0`;
      }
    });
  });
});

document.getElementById("land").setAttribute("d", d);
```
